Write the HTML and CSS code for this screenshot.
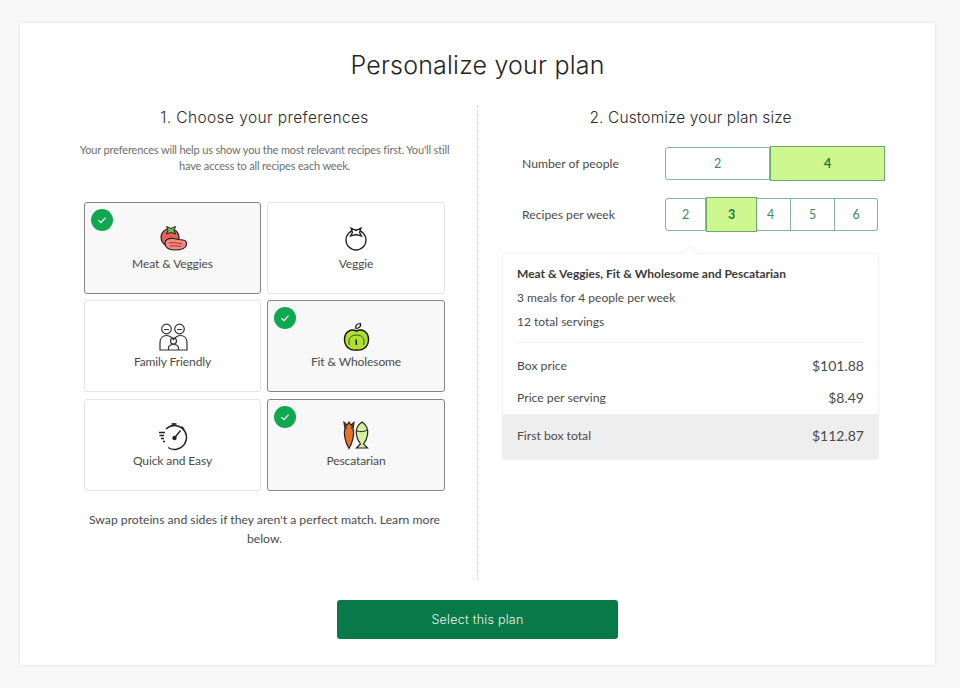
FILE: index.html
```html
<!DOCTYPE html>
<html>
<head>
<meta name="viewport" content="width=device-width, initial-scale=1">
<link rel="stylesheet" href="styles.css">
</head>
<body>

<div class="card">
  <h1 class="title">Personalize your plan</h1>

  <div class="columns">
    <div class="col col-left">
      <h2 class="col-title">1. Choose your preferences</h2>
      <p class="intro">Your preferences will help us show you the most relevant recipes first. You'll still have access to all recipes each week.</p>

      <div class="tiles">
        <div class="tile on">
          <span class="check"><svg viewBox="0 0 12 12"><path d="M2.5 6.3 5 8.6 9.5 3.6"/></svg></span>
          <svg class="icon" viewBox="0 0 30 30">
            <circle cx="12" cy="14.5" r="9" fill="#e8605c" stroke="#222" stroke-width="1.2"/>
            <path d="M8.5 3.5 13 5.5 17.5 3.5 16 7.5 17.5 11 13 9.5 8.5 11 10 7.5Z" fill="#6cc04a" stroke="#222" stroke-width="1"/>
            <path d="M7 20C7 16.5 11 15 15 15.5C19 16 22 17 25 17C27.5 17 29 19 28.5 21.5C28 25.5 24 27 16.5 27C10 27 7 24 7 20Z" fill="#f08a80" stroke="#222" stroke-width="1.2"/>
            <path d="M11 20C15 19 20 20 24 21M12 23C16 22.5 20 23 23 23.5" fill="none" stroke="#a33" stroke-width="1"/>
          </svg>
          <span class="tile-label">Meat &amp; Veggies</span>
        </div>
        <div class="tile">
          <svg class="icon" viewBox="0 0 30 30">
            <circle cx="15" cy="17" r="10" fill="none" stroke="#222" stroke-width="1.3"/>
            <path d="M10 5 15 7.5 20 5 18.5 9.5 20.5 13 15 11.5 9.5 13 11.5 9.5Z" fill="#fff" stroke="#222" stroke-width="1.3"/>
          </svg>
          <span class="tile-label">Veggie</span>
        </div>
        <div class="tile">
          <svg class="icon" viewBox="0 0 30 30">
            <g fill="none" stroke="#333" stroke-width="1.2">
              <circle cx="8.5" cy="8" r="4.8"/>
              <circle cx="21.5" cy="8" r="4.8"/>
              <path d="M6 8.5H11M19 8.5H24"/>
              <path d="M2 29V22C2 17 5 14.5 8.5 14.5C11 14.5 13 15.5 15.5 18.5C18 15.5 20 14.5 22.5 14.5C26 14.5 29 17 29 22V29Z"/>
              <circle cx="15.5" cy="20" r="3"/>
              <path d="M10.5 29V27C10.5 24.5 12.5 23.5 15.5 23.5C18.5 23.5 20.5 24.5 20.5 27V29"/>
            </g>
          </svg>
          <span class="tile-label">Family Friendly</span>
        </div>
        <div class="tile on">
          <span class="check"><svg viewBox="0 0 12 12"><path d="M2.5 6.3 5 8.6 9.5 3.6"/></svg></span>
          <svg class="icon" viewBox="0 0 30 30">
            <path d="M15 7.5C14 5 15.5 2.5 19.5 2.5C20 5 18.5 7.5 15 7.5Z" fill="#fff" stroke="#111" stroke-width="1.2"/>
            <path d="M15.5 10C21 7.5 27.5 10.5 27.5 18.5C27.5 25.5 22 30 15.5 29C9 30 3.5 25.5 3.5 18.5C3.5 10.5 10 7.5 15.5 10Z" fill="#aee02f" stroke="#111" stroke-width="1.4"/>
            <path d="M8.5 24C6.5 17.5 10 14 15.5 14C21 14 24.5 17.5 22.500 24" fill="none" stroke="#222" stroke-width="0.8"/>
            <path d="M15 18.5 15.5 24" stroke="#111" stroke-width="1.4"/>
          </svg>
          <span class="tile-label">Fit &amp; Wholesome</span>
        </div>
        <div class="tile">
          <svg class="icon" viewBox="0 0 30 30">
            <g fill="none" stroke="#222" stroke-width="1.4">
              <path d="M8 9A12 12 0 1 1 10 27.5"/>
              <path d="M13.5 4H18.5M16 3V5.5M23.5 6.500 26 9"/>
              <path d="M1 12.5H7M1.5 15.5H6M3 18.5H6M5 21.5H7"/>
              <path d="M16.5 18 22.5 10.5"/>
            </g>
            <circle cx="16.5" cy="18" r="2.2" fill="#222"/>
          </svg>
          <span class="tile-label">Quick and Easy</span>
        </div>
        <div class="tile on">
          <span class="check"><svg viewBox="0 0 12 12"><path d="M2.5 6.3 5 8.6 9.5 3.6"/></svg></span>
          <svg class="icon" viewBox="0 0 30 30">
            <path d="M3 2.5 6 5 8 2 10 5 13 2.5 12 9C13.5 13 12 22 8 28.5C4 22 2.500 13 4 9Z" fill="#e8722c" stroke="#222" stroke-width="1.2"/>
            <path d="M3.5 2 5.5 9M12.5 2.500 10.5 9" stroke="#4d3a20" stroke-width="1.5"/>
            <path d="M21 2C25.5 5 27.5 10 26.5 15C26 19 24 22 22.5 24L26.5 28H15.5L19.5 24C18 22 16 19 15.5 15C14.5 10 16.5 5 21 2Z" fill="#d6ee9f" stroke="#222" stroke-width="1.2"/>
            <path d="M16 11C19 12 23.5 12 26 10" fill="none" stroke="#222" stroke-width="1"/>
          </svg>
          <span class="tile-label">Pescatarian</span>
        </div>
      </div>

      <p class="swap">Swap proteins and sides if they aren't a perfect match. Learn more below.</p>
    </div>

    <div class="col col-right">
      <h2 class="col-title">2. Customize your plan size</h2>

      <div class="size-row">
        <span class="size-label">Number of people</span>
        <div class="options">
          <div class="opt w105">2</div>
          <div class="opt w115 on">4</div>
        </div>
      </div>
      <div class="size-row size-row-2">
        <span class="size-label">Recipes per week</span>
        <div class="options">
          <div class="opt w41">2</div>
          <div class="opt w51 on">3</div>
          <div class="opt w34">4</div>
          <div class="opt w44">5</div>
          <div class="opt w43">6</div>
        </div>
      </div>

      <div class="summary">
        <div class="summary-top">
          <p class="summary-name">Meat &amp; Veggies, Fit &amp; Wholesome and Pescatarian</p>
          <p class="summary-line">3 meals for 4 people per week</p>
          <p class="summary-line">12 total servings</p>
        </div>
        <div class="price-row price-box"><span>Box price</span><span class="price">$101.88</span></div>
        <div class="price-row price-serving"><span>Price per serving</span><span class="price">$8.49</span></div>
        <div class="price-row price-total"><span>First box total</span><span class="price">$112.87</span></div>
      </div>
    </div>
  </div>

  <div class="actions">
    <button class="select-btn">Select this plan</button>
  </div>
</div>

</body>
</html>
```
FILE: styles.css
```css
* {
  box-sizing: border-box;
}

body {
  margin: 0;
  background-color: #f8f8f8;
  font-family: Lato, "Open Sans", sans-serif;
  color: #4b4b4b;
}

/* White card */
.card {
  width: 915px;
  height: 642px;
  margin: 23px 0 23px 20px;
  padding: 0 32px;
  background-color: #fff;
  box-shadow: 0 0 3px rgba(0,0,0,0.12);
}

.title {
  margin: 0;
  padding-top: 25px;
  height: 83px;
  font-family: Inter, sans-serif;
  font-size: 25px;
  line-height: 34px;
  font-weight: 300;
  letter-spacing: 0.2px;
  text-align: center;
  color: #242424;
}

.columns {
  display: flex;
  height: 474px;
}

.col-left {
  width: 426px;
  padding: 0 32px;
  border-right: 1px dotted #d4d4d4;
}

.col-right {
  width: 425px;
  padding: 0 25px;
}

.col-title {
  margin: 0;
  padding-top: 2px;
  font-family: Inter, sans-serif;
  font-size: 15.5px;
  line-height: 20px;
  font-weight: 300;
  letter-spacing: 0.1px;
  text-align: center;
  color: #2b2b2b;
}

.col-left .col-title {
  letter-spacing: 0.4px;
}

.intro {
  margin: 14px -6px 0;
  font-size: 11px;
  line-height: 16px;
  letter-spacing: -0.15px;
  text-align: center;
  color: #6e6e6e;
}

/* Preference tiles */
.tiles {
  display: grid;
  grid-template-columns: 177px 178px;
  grid-auto-rows: 92px;
  gap: 6.3px 6px;
  margin-top: 28px;
}

.tile {
  position: relative;
  display: flex;
  flex-direction: column;
  align-items: center;
  padding-top: 20px;
  background-color: #fff;
  border: 1px solid #e4e4e4;
  border-radius: 3px;
}

.tile.on {
  background-color: #f8f8f8;
  border-color: #858585;
}

.icon {
  width: 30px;
  height: 30px;
  overflow: visible;
}

.tile-label {
  margin-top: 2px;
  font-size: 12px;
  line-height: 18px;
  letter-spacing: -0.1px;
  color: #4b4b4b;
}

.check {
  position: absolute;
  left: 6px;
  top: 6px;
  width: 22px;
  height: 22px;
  padding: 5px;
  border-radius: 50%;
  background-color: #0fa750;
}

.check svg {
  display: block;
  width: 12px;
  height: 12px;
  fill: none;
  stroke: #fff;
  stroke-width: 1.2;
}

.swap {
  margin: 19px 0 0;
  font-size: 12.2px;
  line-height: 19px;
  text-align: center;
  color: #4b4b4b;
}

/* Plan size */
.size-row {
  display: flex;
  align-items: center;
  height: 33px;
  margin-top: 19px;
  padding-left: 19px;
}

.size-row-2 {
  margin-top: 18px;
}

.size-label {
  flex: none;
  width: 143px;
  font-size: 12.2px;
}

.options {
  flex: none;
  display: flex;
  height: 33px;
}

.opt {
  display: flex;
  align-items: center;
  justify-content: center;
  font-size: 12.5px;
  color: #46876b;
  background-color: #fff;
  border: 1px solid #88b3a0;
  border-left: 0;
}

.opt:first-child {
  border-left: 1px solid #88b3a0;
  border-radius: 3px 0 0 3px;
}

.opt:last-child {
  border-radius: 0 3px 3px 0;
}

.opt.on {
  margin: -1px 0;
  font-weight: bold;
  color: #23793f;
  background-color: #cff78f;
  border: 1px solid #69a873;
  border-radius: 0;
}

.w105 { width: 105px; }
.w115 { width: 115px; }
.w41 { width: 41px; }
.w51 { width: 51px; }
.w34 { width: 34px; padding-right: 6px; }
.w44 { width: 44px; }
.w43 { width: 43px; }

/* Summary box */
.summary {
  position: relative;
  margin-top: 23px;
  height: 205px;
  background-color: #fff;
  border-radius: 2px;
  box-shadow: 0 0 3px rgba(0,0,0,0.14);
}

.summary::before {
  content: "";
  position: absolute;
  left: 181px;
  top: -5px;
  width: 11px;
  height: 11px;
  background-color: #fff;
  transform: rotate(45deg);
  box-shadow: -1px -1px 1px rgba(0,0,0,0.05);
}

.summary-top {
  position: relative;
  height: 89px;
  margin: 0 14px;
  padding-top: 10px;
  border-bottom: 1px solid #eee;
}

.summary-name {
  margin: 0;
  font-size: 12px;
  line-height: 20px;
  font-weight: bold;
  color: #3a3a3a;
}

.summary-line {
  margin: 4px 0 0;
  font-size: 12px;
  line-height: 20px;
}

.price-row {
  display: flex;
  justify-content: space-between;
  align-items: center;
  padding: 0 14px;
  font-size: 12.2px;
}

.price {
  font-size: 14px;
}

.price-box {
  height: 44px;
}

.price-serving {
  height: 24px;
  margin-top: -2px;
  margin-bottom: 5px;
}

.price-total {
  height: 45px;
  padding-bottom: 2px;
  background-color: #eee;
}

/* Bottom button */
.actions {
  display: flex;
  justify-content: center;
  padding-top: 20px;
}

.select-btn {
  width: 281px;
  height: 39px;
  background-color: #087a48;
  color: #e8f5ee;
  font-family: Inter, sans-serif;
  font-size: 12.5px;
  font-weight: 300;
  letter-spacing: 0.25px;
  border: none;
  border-radius: 3px;
  cursor: pointer;
}

.select-btn:hover {
  opacity: 0.8;
}
```
